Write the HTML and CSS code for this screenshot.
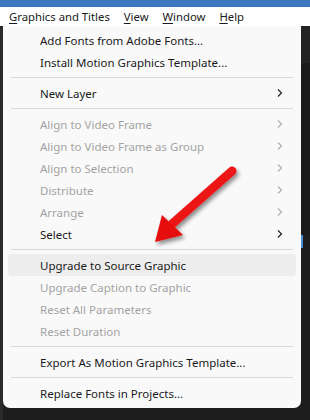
FILE: index.html
```html
<!DOCTYPE html>
<html>
<head>
<meta charset="utf-8">
<link rel="stylesheet" href="styles.css">
</head>
<body>
<div class="screen">
  <div class="titlebar"></div>
  <div class="menubar">
    <span class="mb-item"><u>G</u>raphics and Titles</span>
    <span class="mb-item"><u>V</u>iew</span>
    <span class="mb-item"><u>W</u>indow</span>
    <span class="mb-item"><u>H</u>elp</span>
  </div>
  <div class="stage">
    <div class="left-strip"></div>
    <div class="menu">
      <div class="item">Add Fonts from Adobe Fonts...</div>
      <div class="item">Install Motion Graphics Template...</div>
      <div class="sep"></div>
      <div class="item">New Layer<svg class="chev" width="6" height="10" viewBox="0 0 6 10"><path d="M1 1.5 L4.5 5 L1 8.5" /></svg></div>
      <div class="sep"></div>
      <div class="item dis">Align to Video Frame<svg class="chev" width="6" height="10" viewBox="0 0 6 10"><path d="M1 1.5 L4.5 5 L1 8.5" /></svg></div>
      <div class="item dis">Align to Video Frame as Group<svg class="chev" width="6" height="10" viewBox="0 0 6 10"><path d="M1 1.5 L4.5 5 L1 8.5" /></svg></div>
      <div class="item dis">Align to Selection<svg class="chev" width="6" height="10" viewBox="0 0 6 10"><path d="M1 1.5 L4.5 5 L1 8.5" /></svg></div>
      <div class="item dis">Distribute<svg class="chev" width="6" height="10" viewBox="0 0 6 10"><path d="M1 1.5 L4.5 5 L1 8.5" /></svg></div>
      <div class="item dis">Arrange<svg class="chev" width="6" height="10" viewBox="0 0 6 10"><path d="M1 1.5 L4.5 5 L1 8.5" /></svg></div>
      <div class="item">Select<svg class="chev" width="6" height="10" viewBox="0 0 6 10"><path d="M1 1.5 L4.5 5 L1 8.5" /></svg></div>
      <div class="sep"></div>
      <div class="item hover">Upgrade to Source Graphic</div>
      <div class="item dis">Upgrade Caption to Graphic</div>
      <div class="item dis">Reset All Parameters</div>
      <div class="item dis">Reset Duration</div>
      <div class="sep"></div>
      <div class="item">Export As Motion Graphics Template...</div>
      <div class="sep"></div>
      <div class="item">Replace Fonts in Projects...</div>
    </div>
    <div class="right-area">
      <div class="ra-top"></div>
      <div class="ra-mid"></div>
      <div class="ra-blue"></div>
    </div>
  </div>
  <svg class="arrow" width="310" height="420" viewBox="0 0 310 420">
    <defs>
      <filter id="sh" x="-20%" y="-20%" width="140%" height="140%">
        <feGaussianBlur in="SourceAlpha" stdDeviation="2"/>
        <feOffset dx="2" dy="3" result="b"/>
        <feComponentTransfer><feFuncA type="linear" slope="0.45"/></feComponentTransfer>
        <feMerge><feMergeNode/><feMergeNode in="SourceGraphic"/></feMerge>
      </filter>
      <linearGradient id="rg" x1="0" y1="0" x2="1" y2="1">
        <stop offset="0" stop-color="#ff2a2a"/>
        <stop offset="1" stop-color="#d90000"/>
      </linearGradient>
    </defs>
    <g filter="url(#sh)">
      <line x1="232" y1="171" x2="172" y2="224" stroke="url(#rg)" stroke-width="9" stroke-linecap="round"/>
      <polygon points="155,242 162,215 183,235" fill="#e60d0d"/>
    </g>
  </svg>
</div>
</body>
</html>
```
FILE: styles.css
```css
* { box-sizing: border-box; }
html, body { margin: 0; padding: 0; }
body {
  width: 310px;
  height: 420px;
  overflow: hidden;
  background: #1d1d1d;
  font-family: "Noto Sans", "Open Sans", sans-serif;
}
.screen {
  position: relative;
  width: 310px;
  height: 420px;
}
.titlebar {
  height: 7px;
  background: #3a77bf;
}
.menubar {
  height: 19px;
  background: #ffffff;
  display: flex;
  align-items: center;
  padding-left: 2px;
  font-size: 11.3px;
  color: #1a1a1a;
}
.mb-item {
  padding: 0 7px;
  white-space: nowrap;
}
.mb-item u { text-decoration-thickness: 1px; text-underline-offset: 2px; }
.stage {
  display: flex;
  align-items: flex-start;
}
.left-strip {
  width: 3px;
  height: 394px;
  background: #2a2a2a;
}
.menu {
  width: 298px;
  background: #f9f9f9;
  border-radius: 0 0 7px 7px;
  padding: 3px 0 4px;
  font-size: 11.5px;
  color: #1a1a1a;
}
.item {
  height: 22px;
  margin: 0 5px;
  padding: 0 13px 0 32px;
  display: flex;
  align-items: center;
  justify-content: space-between;
  white-space: nowrap;
  border-radius: 4px;
}
.item.dis { color: #a3a3a3; }
.item.hover { background: #ededed; }
.chev { fill: none; stroke: #222; stroke-width: 1.2; }
.item.dis .chev { stroke: #b0b0b0; }
.sep {
  height: 1px;
  margin: 4px 8px 4px 8px;
  background: #d9d9d9;
}
.right-area {
  flex: 1;
  display: flex;
  flex-direction: column;
}
.ra-top { height: 37px; background: #232323; }
.ra-mid { height: 172px; background: #1b1b1b; }
.ra-blue { height: 13px; width: 2px; background: #4d8fd6; }
.arrow {
  position: absolute;
  left: 0;
  top: 0;
  pointer-events: none;
}
```
